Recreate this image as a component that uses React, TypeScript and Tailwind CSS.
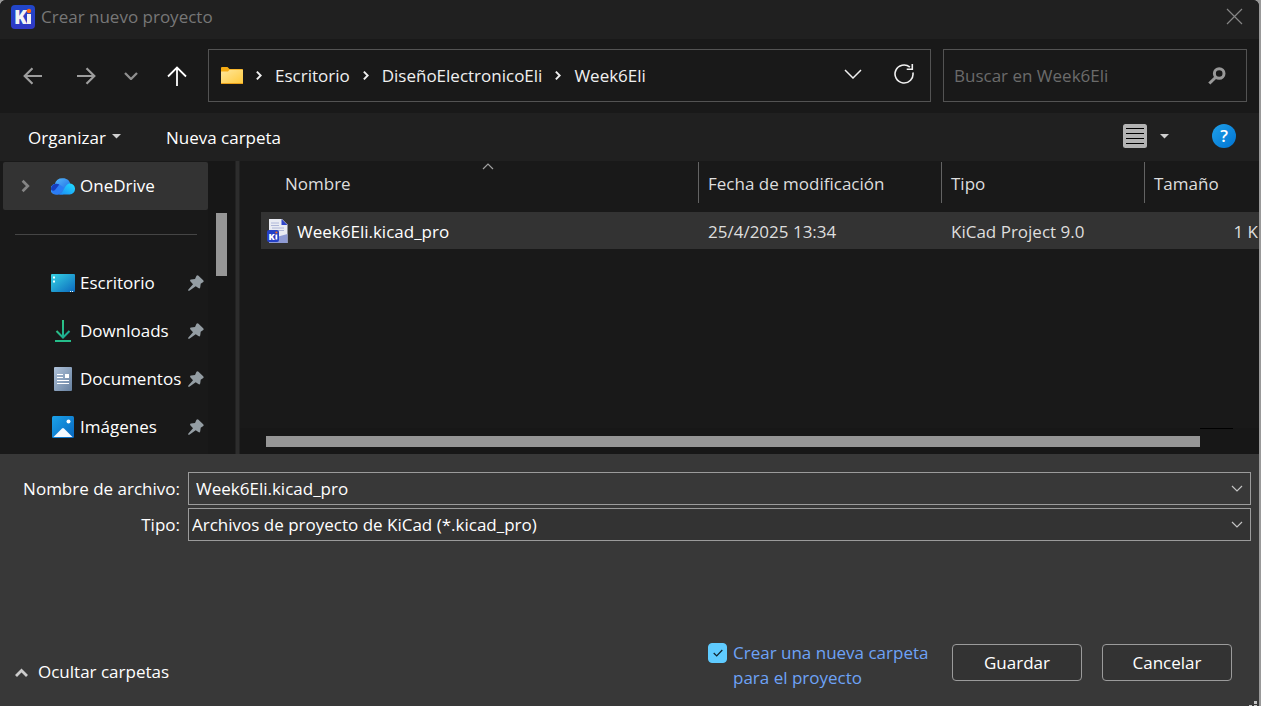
import React, { useState } from "react";

type IconProps = { className?: string };

function Chevron({ className }: IconProps) {
  return (
    <svg className={className} viewBox="0 0 7 12" fill="none" stroke="currentColor" aria-hidden="true">
      <path d="M1 1.500 5.500 6 1 10.500" strokeWidth="2.300" />
    </svg>
  );
}

function ThinDown({ className }: IconProps) {
  return (
    <svg className={className} viewBox="0 0 18 10" fill="none" stroke="currentColor" aria-hidden="true">
      <path d="m1 1 8 8 8-8" strokeWidth="1.500" />
    </svg>
  );
}

function SmallDown({ className }: IconProps) {
  return (
    <svg className={className} viewBox="0 0 12 8" fill="none" stroke="currentColor" aria-hidden="true">
      <path d="m1 1 5 5 5-5" strokeWidth="1.200" />
    </svg>
  );
}

function Triangle({ className }: IconProps) {
  return (
    <svg className={className} viewBox="0 0 9 5" fill="currentColor" aria-hidden="true">
      <path d="M0 0h9L4.500 4.500z" />
    </svg>
  );
}

function KiCadLogo() {
  return (
    <svg className="size-6 shrink-0" viewBox="0 0 24 24" aria-hidden="true">
      <defs>
        <linearGradient id="ki" x1="0" y1="0" x2="0" y2="1">
          <stop offset="0" stopColor="#2147c9" />
          <stop offset="1" stopColor="#3038c4" />
        </linearGradient>
      </defs>
      <rect width="24" height="24" rx="4" fill="url(#ki)" />
      <text x="3" y="19" fontFamily="Open Sans, sans-serif" fontWeight="800" fontSize="19" fill="#f3f3f3">K</text>
      <rect x="16" y="9" width="4" height="10" fill="#f3f3f3" />
      <circle cx="18" cy="6" r="2.200" fill="#ff6a13" />
    </svg>
  );
}

function KiCadFile() {
  return (
    <svg className="h-6 w-[21px] shrink-0" viewBox="0 0 21 24" aria-hidden="true">
      <path d="M2 0h13l5.500 5.500V24H2z" fill="#e9ebf3" />
      <path d="M2 24v-4l18.500-5V24z" fill="#8f9bd4" />
      <path d="M14.500 0v6h6z" fill="#2f45c8" />
      <path d="M4 4h8M4 6.500h8M5 9h12M9 11.500h8" stroke="#aeb6d8" strokeWidth="1" />
      <rect y="11" width="12" height="12" rx="2" fill="#2541c6" />
      <text x="1.500" y="20.500" fontFamily="Open Sans, sans-serif" fontWeight="800" fontSize="9" fill="#fff">K</text>
      <rect x="8.500" y="15.500" width="1.800" height="5" fill="#fff" />
      <circle cx="9.400" cy="13.500" r="1.100" fill="#ff6a13" />
    </svg>
  );
}

function Folder() {
  return (
    <svg className="h-[17px] w-[22px] shrink-0" viewBox="0 0 22 17" aria-hidden="true">
      <defs>
        <linearGradient id="folder" x1="0" y1="0" x2="1" y2="1">
          <stop offset="0" stopColor="#ffe79b" />
          <stop offset="1" stopColor="#ffc93c" />
        </linearGradient>
      </defs>
      <path d="M0 1q0-1 1-1h5.500l2 2H21q1 0 1 1v13H0z" fill="#f5ab13" />
      <path d="M0 4.500h7l1.500-1.700H22V16q0 .5-.5.5H.5Q0 16.500 0 16z" fill="url(#folder)" />
      <path d="M0 16.500h22" stroke="#eaa01a" />
    </svg>
  );
}

function OneDrive() {
  return (
    <svg className="h-[17px] w-6" viewBox="0 0 24 17" aria-hidden="true">
      <defs>
        <linearGradient id="od1" x1="0" y1="0" x2="1" y2="1">
          <stop offset="0" stopColor="#5cc3ff" />
          <stop offset="1" stopColor="#1560e0" />
        </linearGradient>
        <linearGradient id="od2" x1="1" y1="0" x2="0" y2="1">
          <stop offset="0" stopColor="#20e0ff" />
          <stop offset="1" stopColor="#1c86f5" />
        </linearGradient>
      </defs>
      <path d="M5.500 16.500A5.300 5.300 0 0 1 3.800 6 8 8 0 0 1 12 .3c4 0 6.500 2.500 7.200 5.200L12 16.500z" fill="url(#od1)" />
      <path d="M3.800 6a6 6 0 0 1 4.500.6l4.500 3-5.500 6.900H5.500A5.300 5.300 0 0 1 0 11.300 5.600 5.600 0 0 1 3.800 6z" fill="#2b7cf5" />
      <path d="M3.800 6c1.800-.4 3.400 0 4.500.6L4 12c-1.500 1.500-3 .5-4-.5A5.600 5.600 0 0 1 3.800 6z" fill="#173fbf" />
      <path d="M7 16.500c3 0 4.500-2.500 6-5.500s3-5.500 6.200-5.500A5.300 5.300 0 0 1 24 11a5.400 5.400 0 0 1-5.300 5.500z" fill="url(#od2)" />
    </svg>
  );
}

function Desktop() {
  return (
    <svg className="h-[18px] w-6" viewBox="0 0 24 18" aria-hidden="true">
      <defs>
        <linearGradient id="desk" x1="0" y1="0" x2="1" y2="1">
          <stop offset="0" stopColor="#36d3e4" />
          <stop offset="1" stopColor="#0b68bd" />
        </linearGradient>
      </defs>
      <rect width="24" height="18" rx="1" fill="url(#desk)" />
      <path d="M2 2.500h2v2H2zM2 6.500h2v2H2zM19 17h1v1h-1zM21 17h1v1h-1z" fill="#eaffff" />
    </svg>
  );
}

function Downloads() {
  return (
    <svg className="h-6 w-6" viewBox="0 0 24 24" fill="none" aria-hidden="true">
      <defs>
        <linearGradient id="down" x1="0" y1="0" x2="1" y2="1">
          <stop offset="0" stopColor="#36d07e" />
          <stop offset="1" stopColor="#16a598" />
        </linearGradient>
      </defs>
      <path d="M12 1v17M5.500 12l6.500 6.500 6.500-6.500" stroke="url(#down)" strokeWidth="2" />
      <path d="M4 22h16" stroke="#25bd8a" strokeWidth="2" />
    </svg>
  );
}

function Documents() {
  return (
    <svg className="h-6 w-6" viewBox="0 0 24 24" aria-hidden="true">
      <defs>
        <linearGradient id="docs" x1="0" y1="0" x2="1" y2="1">
          <stop offset="0" stopColor="#b0c3da" />
          <stop offset="1" stopColor="#66809f" />
        </linearGradient>
      </defs>
      <rect x="3" width="18" height="24" rx="1" fill="url(#docs)" />
      <path d="M6 7.500h6M6 10.500h6M6 13.500h12M6 16.500h12" stroke="#fff" strokeWidth="1.200" />
      <rect x="14" y="7" width="4" height="4" fill="#fff" />
    </svg>
  );
}

function Pictures() {
  return (
    <svg className="h-[22px] w-6" viewBox="0 0 24 22" aria-hidden="true">
      <defs>
        <linearGradient id="pics" x1="0" y1="0" x2="1" y2="1">
          <stop offset="0" stopColor="#1ba2ea" />
          <stop offset="1" stopColor="#0867bf" />
        </linearGradient>
      </defs>
      <rect x="1" width="22" height="22" rx="1.500" fill="url(#pics)" />
      <path d="m2.500 21 8.500-8.500q1-1 2 0l8.500 8.500z" fill="#f4f9ff" />
      <circle cx="17.500" cy="5.500" r="2" fill="#fff" />
    </svg>
  );
}

function Pin() {
  return (
    <svg className="h-4 w-4" viewBox="0 0 16 16" fill="#949da3" aria-hidden="true">
      <path d="M8.500.8q1-.9 2 0l4.700 4.500q.8.900.1 1.700l-2.600 1.700-.5 3.800q-.6 1.500-1.800.6L7.700 11.200 1.700 15.600q-1.300.6-1.600-.2 0-.6.500-1.200L5 9.200 2.300 6.300q-.7-1.300.7-1.700l4-.6z" />
    </svg>
  );
}

const places = [
  { name: "Escritorio", icon: <Desktop /> },
  { name: "Downloads", icon: <Downloads /> },
  { name: "Documentos", icon: <Documents /> },
  { name: "Imágenes", icon: <Pictures /> },
];

const path = ["Escritorio", "DiseñoElectronicoEli", "Week6Eli"];

function TitleBar() {
  return (
    <header className="flex h-[39px] items-start justify-between bg-[#202020] pt-1 pr-4 pl-[11px]">
      <div className="flex items-center gap-[6px]">
        <KiCadLogo />
        <h1 className="pt-px text-[#777777]">Crear nuevo proyecto</h1>
      </div>
      <button type="button" aria-label="Cerrar" className="mt-1 text-[#858585]">
        <svg className="h-[17px] w-[17px]" viewBox="0 0 17 17" fill="none" stroke="currentColor" strokeWidth="1.200">
          <path d="m1 1 15 15M16 1 1 16" />
        </svg>
      </button>
    </header>
  );
}

function NavBar() {
  return (
    <nav className="flex items-center bg-[#191919] pt-[10px] pr-3 pb-[11px] pl-[6px]">
      <button type="button" aria-label="Atrás" className="flex w-[53px] justify-center text-[#9d9d9d]">
        <svg className="h-[18px] w-5" viewBox="0 0 20 18" fill="none" stroke="currentColor" strokeWidth="2.200">
          <path d="M19 9H2M9.500 1.200 1.700 9l7.800 7.800" />
        </svg>
      </button>
      <button type="button" aria-label="Adelante" className="flex w-[53px] justify-center text-[#9d9d9d]">
        <svg className="h-[18px] w-5" viewBox="0 0 20 18" fill="none" stroke="currentColor" strokeWidth="2.200">
          <path d="M1 9h17M10.500 1.200 18.300 9l-7.800 7.800" />
        </svg>
      </button>
      <button type="button" aria-label="Ubicaciones recientes" className="flex w-[37px] justify-center text-[#8f8f8f]">
        <svg className="h-2 w-[14px]" viewBox="0 0 14 8" fill="none" stroke="currentColor" strokeWidth="2.300">
          <path d="m1 1 6 6 6-6" />
        </svg>
      </button>
      <button type="button" aria-label="Subir" className="mr-[3px] flex w-14 justify-center text-white">
        <svg className="h-5 w-5" viewBox="0 0 20 20" fill="none" stroke="currentColor" strokeWidth="1.800">
          <path d="M10 20V2M1 10.500l9-9 9 9" />
        </svg>
      </button>
      <div className="mr-3 flex h-[53px] min-w-0 flex-1 items-center border border-[#535353] pr-4 pl-3 text-[#f0f0f0]">
        <Folder />
        <ol className="flex min-w-0 flex-1 items-center">
          {path.map((part) => (
            <li key={part} className="flex items-center">
              <span className="flex w-8 justify-center">
                <Chevron className="h-[11px] w-[6px]" />
              </span>
              <a href="#">{part}</a>
            </li>
          ))}
        </ol>
        <button type="button" aria-label="Ubicaciones anteriores" className="mr-8 pb-1">
          <ThinDown className="h-[10px] w-[18px]" />
        </button>
        <button type="button" aria-label="Actualizar" className="pb-1">
          <svg className="h-[21px] w-5" viewBox="0 0 20 21" fill="none" stroke="currentColor" strokeWidth="1.600">
            <path d="M18.900 9.500A9 9 0 1 1 15.900 4.200M18.300 1v5.200h-5.600" />
          </svg>
        </button>
      </div>
      <label className="flex h-[53px] w-[304px] items-center border border-[#535353] pr-5 pl-[10px]">
        <input
          type="search"
          aria-label="Buscar en Week6Eli"
          placeholder="Buscar en Week6Eli"
          className="min-w-0 flex-1 bg-transparent text-[#e0e0e0] outline-none placeholder:text-[#6b6b6b]"
        />
        <svg className="h-[18px] w-[18px]" viewBox="0 0 18 18" fill="none" stroke="#989898" aria-hidden="true">
          <circle cx="11.200" cy="6.500" r="4.800" strokeWidth="3" />
          <path d="M7.500 10.500 1.300 16.500" strokeWidth="3" />
        </svg>
      </label>
    </nav>
  );
}

function Toolbar() {
  return (
    <div className="flex h-12 items-center bg-[#202020] pr-[23px] pl-7 text-white">
      <button type="button" className="flex items-center gap-[6px] pt-0.5">
        Organizar
        <Triangle className="mb-1 h-[5px] w-[9px] text-[#cfcfcf]" />
      </button>
      <button type="button" className="ml-[45px] pt-0.5">Nueva carpeta</button>
      <button type="button" aria-label="Cambiar la vista" className="mb-0.5 ml-auto flex items-center gap-[13px]">
        <svg className="size-6" viewBox="0 0 24 24" aria-hidden="true">
          <rect width="24" height="24" rx="2.500" fill="#b3b3b3" />
          <path d="M3 4.500h18M3 9.500h18M3 14.500h18M3 19.500h18" stroke="#000" />
        </svg>
        <Triangle className="h-[5px] w-[9px] text-[#cfcfcf]" />
      </button>
      <button
        type="button"
        aria-label="Ayuda"
        className="mb-0.5 ml-[43px] flex size-6 items-center justify-center rounded-full bg-linear-to-br from-[#1fa0e8] to-[#0273d2] font-semibold"
      >
        ?
      </button>
    </div>
  );
}

function Sidebar() {
  return (
    <aside className="flex w-[240px] shrink-0">
      <div className="ml-[3px] w-[205px] pt-px">
        <a href="#" className="flex h-12 items-center rounded-xs bg-[#333333] pl-[18px] text-white">
          <Chevron className="h-[14px] w-[9px] text-[#858585]" />
          <span className="mr-[5px] ml-[21px]">
            <OneDrive />
          </span>
          OneDrive
        </a>
        <hr className="mt-6 mr-[11px] mb-6 ml-3 border-t border-[#454545]" />
        <ul>
          {places.map((place) => (
            <li key={place.name}>
              <a href="#" className="flex h-12 items-center pr-1 pl-12 text-white">
                <span className="mr-[5px]">{place.icon}</span>
                <span className="flex-1">{place.name}</span>
                <Pin />
              </a>
            </li>
          ))}
        </ul>
      </div>
      <div className="flex-1 bg-[#171717] pt-[52px] pl-2">
        <div className="h-[63px] w-[11px] bg-[#969696]" />
      </div>
      <div className="w-[5px] border-x border-[#222222] bg-[#2d2d2d]" />
    </aside>
  );
}

function FileList() {
  return (
    <main className="flex min-w-0 flex-1 flex-col overflow-hidden">
      <div className="flex-1 overflow-hidden pt-px pl-[21px]">
        <table className="w-[calc(100%+21px)] table-fixed">
          <colgroup>
            <col />
            <col className="w-[243px]" />
            <col className="w-[203px]" />
            <col className="w-[135px]" />
          </colgroup>
          <thead className="text-left text-[#dedede]">
            <tr className="h-[50px] align-top">
              <th className="p-0 font-normal" aria-sort="ascending">
                <div className="relative ml-4 flex h-[41px] items-center border-r border-[#636363] pt-0.5 pl-2">
                  Nombre
                  <svg
                    className="absolute inset-x-0 top-px mx-auto h-[7px] w-3 text-[#a0a0a0]"
                    viewBox="0 0 12 7"
                    fill="none"
                    stroke="currentColor"
                    aria-hidden="true"
                  >
                    <path d="m1 6 5-5 5 5" strokeWidth="1.200" />
                  </svg>
                </div>
              </th>
              <th className="p-0 font-normal">
                <div className="flex h-[41px] items-center border-r border-[#636363] pt-0.5 pl-[9px]">Fecha de modificación</div>
              </th>
              <th className="p-0 font-normal">
                <div className="flex h-[41px] items-center border-r border-[#636363] pt-0.5 pl-[9px]">Tipo</div>
              </th>
              <th className="p-0 font-normal">
                <div className="flex h-[41px] items-center pt-0.5 pl-[9px]">Tamaño</div>
              </th>
            </tr>
          </thead>
          <tbody>
            <tr className="h-[37px] bg-[#333333] text-[#dedede]">
              <td className="p-0">
                <div className="flex items-center gap-[9px] pl-[6px] text-white">
                  <KiCadFile />
                  <span className="pt-0.5">Week6Eli.kicad_pro</span>
                </div>
              </td>
              <td className="p-0 pt-0.5 pl-[9px]">25/4/2025 13:34</td>
              <td className="p-0 pt-0.5 pl-[9px]">KiCad Project 9.0</td>
              <td className="p-0 pt-0.5 pr-[22px] text-right">1 K</td>
            </tr>
          </tbody>
        </table>
      </div>
      <div className="h-[26px] bg-[#171717]">
        <div className="mr-[26px] ml-auto h-px w-[33px] bg-black" />
        <div className="mt-[7px] mr-[59px] ml-[26px] h-[11px] bg-[#969696]" />
      </div>
    </main>
  );
}

function SavePanel() {
  const [fileName, setFileName] = useState("Week6Eli.kicad_pro");
  const [createFolder, setCreateFolder] = useState(true);
  return (
    <form
      className="relative flex h-[252px] flex-col justify-between bg-[#383838] pt-[18px] text-white"
      onSubmit={(event) => event.preventDefault()}
    >
      <div className="grid grid-cols-[180px_1fr] items-center gap-x-2 gap-y-[3px] pr-2">
        <label htmlFor="file-name" className="text-right">Nombre de archivo:</label>
        <div className="flex h-[33px] items-center border border-[#9b9b9b] pr-[7px]">
          <input
            id="file-name"
            value={fileName}
            onChange={(event) => setFileName(event.target.value)}
            className="min-w-0 flex-1 bg-transparent pl-[7px] outline-none"
          />
          <button type="button" aria-label="Nombres anteriores">
            <SmallDown className="h-2 w-3 text-[#c4c4c4]" />
          </button>
        </div>
        <label htmlFor="file-type" className="text-right">Tipo:</label>
        <div className="grid h-[33px] items-center border border-[#9b9b9b] bg-[#333333]">
          <select id="file-type" className="col-start-1 row-start-1 w-full appearance-none bg-transparent pl-[3px] outline-none">
            <option>Archivos de proyecto de KiCad (*.kicad_pro)</option>
          </select>
          <SmallDown className="pointer-events-none col-start-1 row-start-1 mr-[7px] h-2 w-3 justify-self-end text-[#c4c4c4]" />
        </div>
      </div>
      <div className="flex items-start pr-[27px] pb-4 pl-[15px]">
        <button type="button" className="mt-5 flex items-center gap-[10px]">
          <svg className="h-[9px] w-[13px]" viewBox="0 0 13 9" fill="none" stroke="#cccccc" strokeWidth="2.800" aria-hidden="true">
            <path d="m1 8 5.500-5.500L12 8" />
          </svg>
          Ocultar carpetas
        </button>
        <label className="ml-auto flex w-[224px] items-start gap-[6px] leading-[25px] text-[#6ea3f7]">
          <span className="mt-[3px] grid shrink-0">
            <input
              type="checkbox"
              checked={createFolder}
              onChange={(event) => setCreateFolder(event.target.checked)}
              className="peer col-start-1 row-start-1 h-5 w-[19px] appearance-none rounded-sm border border-[#9b9b9b] checked:border-[#5fcbff] checked:bg-[#5fcbff]"
            />
            <svg
              className="pointer-events-none invisible col-start-1 row-start-1 h-2 w-[10px] place-self-center peer-checked:visible"
              viewBox="0 0 10 8"
              fill="none"
              stroke="#10222d"
              strokeWidth="1.200"
              aria-hidden="true"
            >
              <path d="m.7 4 3 3L9.300 1" />
            </svg>
          </span>
          <span>
            Crear una nueva carpeta <br />
            para el proyecto
          </span>
        </label>
        <button type="submit" className="mt-1 ml-5 h-[37px] w-[130px] rounded-sm border border-[#9b9b9b] bg-[#333333]">
          Guardar
        </button>
        <button type="button" className="mt-1 ml-5 h-[37px] w-[130px] rounded-sm border border-[#9b9b9b] bg-[#333333]">
          Cancelar
        </button>
      </div>
      <svg className="absolute right-0 bottom-0 h-[6px] w-[11px]" viewBox="0 0 11 6" fill="#c4c4c4" aria-hidden="true">
        <path d="M6 1h3v3H6zM6 5h3v1H6zM1 5h3v1H1z" />
      </svg>
    </form>
  );
}

export default function App() {
  return (
    <div className="flex min-h-screen bg-[#999999] pr-[2px] font-['Open_Sans','Noto_Sans',sans-serif] text-[17px] leading-6">
      <div className="flex min-w-0 flex-1 flex-col overflow-hidden rounded-t-md bg-[#191919]">
        <TitleBar />
        <NavBar />
        <Toolbar />
        <div className="flex flex-1">
          <Sidebar />
          <FileList />
        </div>
        <SavePanel />
      </div>
    </div>
  );
}
